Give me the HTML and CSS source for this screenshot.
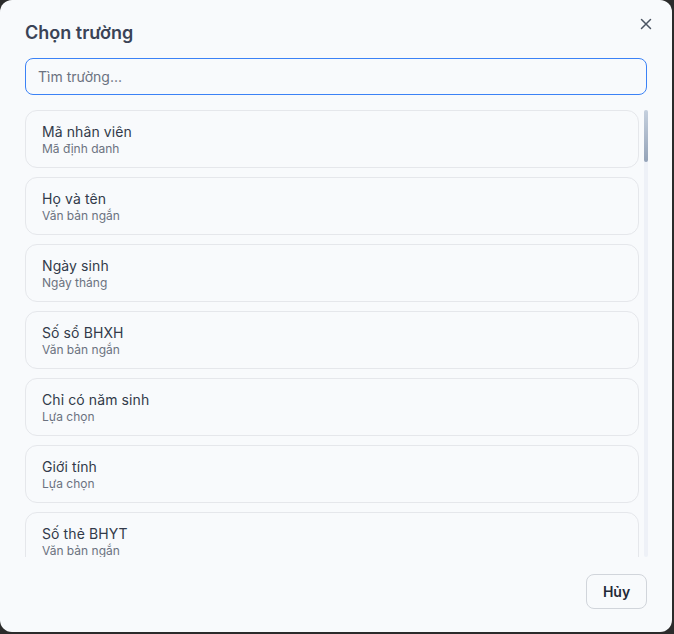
FILE: index.html
```html
<!DOCTYPE html>
<html lang="vi">
<head>
    <meta charset="UTF-8">
    <meta name="viewport" content="width=device-width, initial-scale=1.0">
    <title>Chọn trường</title>
    <link rel="stylesheet" href="styles.css">
</head>
<body>
    <div class="dialog">
        <div class="dialog-header">
            <div class="dialog-title">Chọn trường</div>
            <button class="close-button" aria-label="Đóng">
                <svg width="12" height="12" viewBox="0 0 12 12">
                    <path d="M1.5 1.5 L10.5 10.5 M10.5 1.5 L1.5 10.5" stroke="#4b5563" stroke-width="1.5" stroke-linecap="round"/>
                </svg>
            </button>
        </div>

        <input type="text" class="search-input" placeholder="Tìm trường...">

        <!-- Field list -->
        <div class="list-wrap">
            <div class="field-list">
                <div class="field-item">
                    <div class="field-name">Mã nhân viên</div>
                    <div class="field-type">Mã định danh</div>
                </div>
                <div class="field-item">
                    <div class="field-name">Họ và tên</div>
                    <div class="field-type">Văn bản ngắn</div>
                </div>
                <div class="field-item">
                    <div class="field-name">Ngày sinh</div>
                    <div class="field-type">Ngày tháng</div>
                </div>
                <div class="field-item">
                    <div class="field-name">Số sổ BHXH</div>
                    <div class="field-type">Văn bản ngắn</div>
                </div>
                <div class="field-item">
                    <div class="field-name">Chỉ có năm sinh</div>
                    <div class="field-type">Lựa chọn</div>
                </div>
                <div class="field-item">
                    <div class="field-name">Giới tính</div>
                    <div class="field-type">Lựa chọn</div>
                </div>
                <div class="field-item">
                    <div class="field-name">Số thẻ BHYT</div>
                    <div class="field-type">Văn bản ngắn</div>
                </div>
            </div>
            <div class="scroll-track">
                <div class="scroll-thumb"></div>
            </div>
        </div>

        <div class="dialog-footer">
            <button class="cancel-button">Hủy</button>
        </div>
    </div>
</body>
</html>
```

FILE: styles.css
```css
body {
    margin: 0;
    height: 100vh;
    background: #2b2b2b;
    font-family: 'Inter', 'Noto Sans', sans-serif;
    overflow: hidden;
}

.dialog {
    width: 672px;
    height: 632px;
    box-sizing: border-box;
    background: #f8fafc;
    border-radius: 12px;
    padding: 19px 25px 22px 25px;
    display: flex;
    flex-direction: column;
}

.dialog-header {
    display: flex;
    justify-content: space-between;
    align-items: center;
    height: 28px;
}

.dialog-title {
    font-size: 18px;
    font-weight: 600;
    color: #3a4356;
    line-height: 28px;
}

.close-button {
    background: none;
    border: none;
    padding: 0;
    width: 12px;
    height: 12px;
    margin-right: -5px;
    margin-top: -18px;
    cursor: pointer;
}

.close-button svg {
    display: block;
}

.search-input {
    margin-top: 11px;
    height: 37px;
    box-sizing: border-box;
    width: 100%;
    padding: 0 12px;
    border: 1px solid #3b82f6;
    border-radius: 8px;
    background: #f8fafc;
    font-family: inherit;
    font-size: 14px;
    color: #374151;
    outline: none;
}

.search-input::placeholder {
    color: #6b7280;
}

/* Field list */
.list-wrap {
    margin-top: 15px;
    margin-right: -1px;
    height: 447px;
    display: flex;
    gap: 5px;
}

.field-list {
    flex: 1;
    overflow: hidden;
    display: flex;
    flex-direction: column;
    gap: 9px;
}

.scroll-track {
    width: 4px;
    background: #eef1f7;
    border-radius: 2px;
}

.scroll-thumb {
    height: 52px;
    background: linear-gradient(#c5d0de, #94a3b8);
    border-radius: 2px;
}

.field-item {
    flex-shrink: 0;
    border: 1px solid #e5e7eb;
    border-radius: 12px;
    padding: 12px 16px 10px 16px;
    background: #f8fafc;
}

.field-name {
    font-size: 14px;
    line-height: 18px;
    font-weight: 400;
    letter-spacing: 0.1px;
    color: #323a4a;
}

.field-type {
    font-size: 12px;
    line-height: 16px;
    color: #6b7280;
}

.dialog-footer {
    margin-top: 17px;
    display: flex;
    justify-content: flex-end;
}

.cancel-button {
    height: 35px;
    width: 61px;
    border: 1px solid #d1d5db;
    border-radius: 8px;
    background: #f8fafc;
    font-family: inherit;
    font-size: 14px;
    font-weight: 600;
    color: #1f2937;
    cursor: pointer;
}
```
